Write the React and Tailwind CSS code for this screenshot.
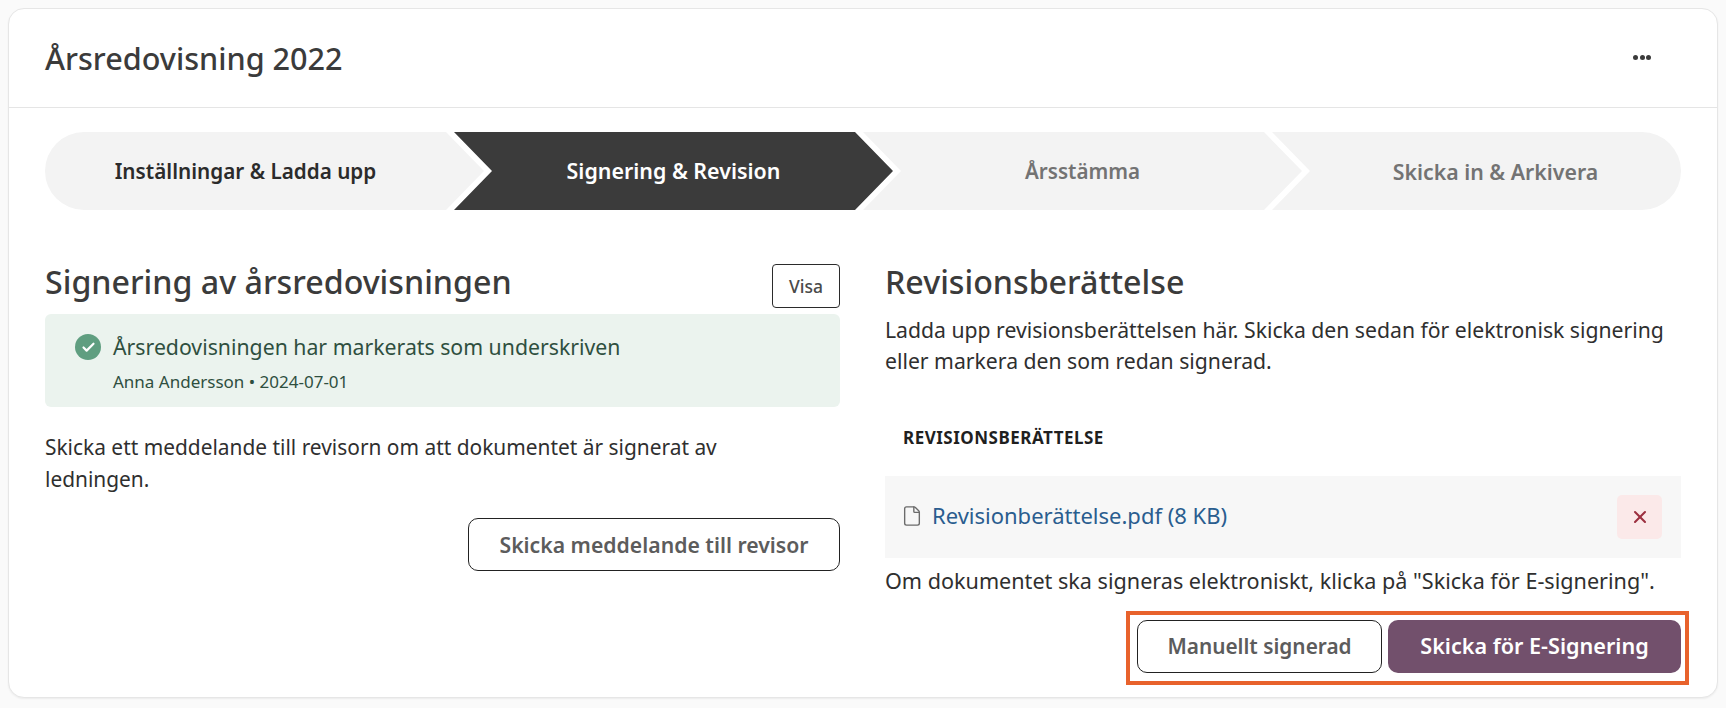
import React from 'react';
import { File, Check, X } from 'lucide-react';

function Step({ label, className }) {
  return (
    <div className={`h-[78px] flex items-center justify-center pt-[1px] font-semibold ${className}`}>
      {label}
    </div>
  );
}

function App() {
  return (
    <div className="min-h-[708px] bg-[#fafafa] p-2 font-['Noto_Sans',sans-serif] text-[#3b3b3b]">
      <div className="w-[1710px] h-[690px] bg-white border border-[#e6e6e6] rounded-[16px] shadow-[0_1px_2px_rgba(0,0,0,0.06)]">
        {/* Header */}
        <div className="h-[99px] pl-9 pr-[49px] flex items-center justify-between border-b border-[#e5e5e5]">
          <h1 className="text-[30.6px] font-medium leading-[36px] pb-[1px]">Årsredovisning 2022</h1>
          <div className="w-[52px] h-[40px] flex items-center justify-center gap-[1.5px] mb-[1px]">
            <span className="w-[5px] h-[5px] rounded-full bg-[#3b3b3b]" />
            <span className="w-[5px] h-[5px] rounded-full bg-[#3b3b3b]" />
            <span className="w-[5px] h-[5px] rounded-full bg-[#3b3b3b]" />
          </div>
        </div>

        <div className="px-9 pt-6">
          {/* Stepper */}
          <div className="flex">
            <Step
              label="Inställningar & Ladda upp"
              className="w-[439px] pr-[38px] text-[20.7px] rounded-l-full bg-[#f3f3f3] text-[#2b2b2b] [clip-path:polygon(0_0,calc(100%-38px)_0,100%_50%,calc(100%-38px)_100%,0_100%)]"
            />
            <Step
              label="Signering & Revision"
              className="w-[439px] -ml-[30px] text-[21.4px] bg-[#3b3b3b] text-white [clip-path:polygon(0_0,calc(100%-38px)_0,100%_50%,calc(100%-38px)_100%,0_100%,38px_50%)]"
            />
            <Step
              label="Årsstämma"
              className="w-[439px] -ml-[30px] text-[20.6px] bg-[#f3f3f3] text-[#737373] [clip-path:polygon(0_0,calc(100%-38px)_0,100%_50%,calc(100%-38px)_100%,0_100%,38px_50%)]"
            />
            <Step
              label="Skicka in & Arkivera"
              className="flex-1 -ml-[30px] pl-[38px] text-[21.3px] rounded-r-full bg-[#f3f3f3] text-[#737373] [clip-path:polygon(0_0,100%_0,100%_100%,0_100%,38px_50%)]"
            />
          </div>

          <div className="grid grid-cols-[795px_796px] gap-[45px] mt-[54px]">
            {/* Left column */}
            <div>
              <div className="flex items-start justify-between h-[44px]">
                <h2 className="text-[32.2px] font-medium leading-[36px]">Signering av årsredovisningen</h2>
                <button className="w-[68px] h-[44px] border border-[#2b2b2b] rounded-[4px] text-[17.5px] font-medium text-[#4a4a4a]">
                  Visa
                </button>
              </div>
              <div className="mt-[6px] h-[93px] bg-[#ebf3ee] rounded-[6px] pl-[30px] pt-[18px] text-[#2f4f3f]">
                <div className="flex items-center gap-[12px]">
                  <span className="w-[26px] h-[26px] rounded-full bg-[#5f9e80] flex items-center justify-center">
                    <Check className="w-[15px] h-[15px] text-white" strokeWidth={3.5} />
                  </span>
                  <span className="text-[21.25px] leading-[30px]">Årsredovisningen har markerats som underskriven</span>
                </div>
                <div className="ml-[38px] mt-[8px] text-[17px] leading-[24px]">Anna Andersson • 2024-07-01</div>
              </div>
              <p className="mt-[24px] max-w-[750px] text-[20.9px] leading-[32px] text-[#2f2f2f]">
                Skicka ett meddelande till revisorn om att dokumentet är signerat av ledningen.
              </p>
              <div className="flex justify-end mt-[23px]">
                <button className="w-[372px] h-[53px] border border-[#222222] rounded-[10px] text-[21.2px] font-semibold text-[#5c5c5c]">
                  Skicka meddelande till revisor
                </button>
              </div>
            </div>

            {/* Right column */}
            <div>
              <h2 className="text-[32.2px] font-medium leading-[36px]">Revisionsberättelse</h2>
              <p className="mt-[14px] text-[21.2px] leading-[31px] text-[#2f2f2f]">
                Ladda upp revisionsberättelsen här. Skicka den sedan för elektronisk signering eller markera den som redan signerad.
              </p>
              <div className="mt-[50px] pl-[18px] text-[17px] tracking-[0.5px] font-bold leading-[24px] text-[#1f1f1f]">REVISIONSBERÄTTELSE</div>
              <div className="mt-[26px] h-[82px] bg-[#f7f7f7] flex items-center justify-between pl-[16px] pr-[19px]">
                <div className="flex items-center gap-[9px] pb-[3px]">
                  <File className="w-[22px] h-[22px] text-[#6b6b6b]" strokeWidth={1.5} />
                  <span className="text-[22px] text-[#2a5d8f]">Revisionberättelse.pdf (8 KB)</span>
                </div>
                <div className="w-[45px] h-[44px] rounded-[5px] bg-[#fbe9e9] flex items-center justify-center">
                  <X className="w-[20px] h-[20px] text-[#9c3040]" strokeWidth={2.5} />
                </div>
              </div>
              <p className="mt-[8px] text-[21.6px] leading-[30px] text-[#2f2f2f]">
                Om dokumentet ska signeras elektroniskt, klicka på "Skicka för E-signering".
              </p>
              <div className="relative mt-[24px] flex justify-end gap-[6px]">
                <button className="w-[245px] h-[53px] border border-[#222222] rounded-[10px] text-[20.8px] font-semibold text-[#5c5c5c]">
                  Manuellt signerad
                </button>
                <button className="w-[293px] h-[53px] rounded-[10px] bg-[#72506c] text-[21.6px] font-semibold text-white">
                  Skicka för E-Signering
                </button>
                <div className="absolute top-[-9px] bottom-[-12px] right-[-8px] left-[241px] border-4 border-[#e8622c] pointer-events-none" />
              </div>
            </div>
          </div>
        </div>
      </div>
    </div>
  );
}

export default App;
